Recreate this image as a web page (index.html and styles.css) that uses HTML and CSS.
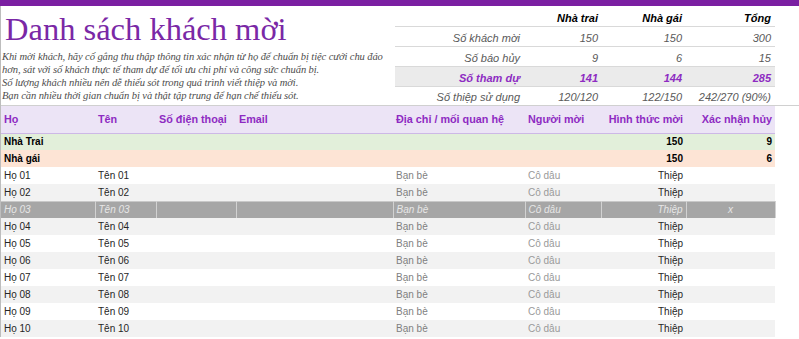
FILE: index.html
```html
<!DOCTYPE html>
<html lang="vi">
<head>
  <meta charset="UTF-8" />
  <title>Danh sách khách mời</title>
  <link rel="stylesheet" href="styles.css">
</head>
<body>

  <div class="top-bar"></div>

  <div class="sheet">
    <div class="top">
      <div class="intro">
        <h1 class="title">Danh sách khách mời</h1>
        <p class="desc">
          Khi mời khách, hãy cố gắng thu thập thông tin xác nhận từ họ để chuẩn bị tiệc cưới chu đáo<br>
          hơn, sát với số khách thực tế tham dự để tối ưu chi phí và công sức chuẩn bị.<br>
          Số lượng khách nhiều nên dễ thiếu sót trong quá trình viết thiệp và mời.<br>
          Bạn cần nhiều thời gian chuẩn bị và thật tập trung để hạn chế thiếu sót.
        </p>
      </div>

      <table class="summary">
        <colgroup>
          <col class="c-label"><col class="c-side"><col class="c-side2"><col class="c-total">
        </colgroup>
        <thead>
          <tr>
            <th></th>
            <th>Nhà trai</th>
            <th>Nhà gái</th>
            <th>Tổng</th>
          </tr>
        </thead>
        <tbody>
          <tr>
            <td>Số khách mời</td><td>150</td><td>150</td><td>300</td>
          </tr>
          <tr>
            <td>Số báo hủy</td><td>9</td><td>6</td><td>15</td>
          </tr>
          <tr class="attending">
            <td>Số tham dự</td><td>141</td><td>144</td><td>285</td>
          </tr>
          <tr class="last">
            <td>Số thiệp sử dụng</td><td>120/120</td><td>122/150</td><td>242/270 (90%)</td>
          </tr>
        </tbody>
      </table>
    </div>

    <table class="guests">
      <colgroup>
        <col style="width:94px"><col style="width:61px"><col style="width:80px"><col style="width:157px">
        <col style="width:132px"><col style="width:76px"><col style="width:85px"><col style="width:89px">
      </colgroup>
      <thead>
        <tr>
          <th>Họ</th>
          <th>Tên</th>
          <th>Số điện thoại</th>
          <th>Email</th>
          <th>Địa chỉ / mối quan hệ</th>
          <th>Người mời</th>
          <th class="num">Hình thức mời</th>
          <th class="num">Xác nhận hủy</th>
        </tr>
      </thead>
      <tbody>
        <tr class="group groom">
          <td>Nhà Trai</td><td></td><td></td><td></td><td></td><td></td>
          <td class="num">150</td><td class="num">9</td>
        </tr>
        <tr class="group bride">
          <td>Nhà gái</td><td></td><td></td><td></td><td></td><td></td>
          <td class="num">150</td><td class="num">6</td>
        </tr>
        <tr>
          <td>Họ 01</td><td>Tên 01</td><td></td><td></td>
          <td class="muted">Bạn bè</td><td class="faint">Cô dâu</td><td class="num">Thiệp</td><td></td>
        </tr>
        <tr class="alt">
          <td>Họ 02</td><td>Tên 02</td><td></td><td></td>
          <td class="muted">Bạn bè</td><td class="faint">Cô dâu</td><td class="num">Thiệp</td><td></td>
        </tr>
        <tr class="cancelled">
          <td>Họ 03</td><td>Tên 03</td><td></td><td></td>
          <td>Bạn bè</td><td>Cô dâu</td><td class="num">Thiệp</td><td class="center">x</td>
        </tr>
        <tr class="alt">
          <td>Họ 04</td><td>Tên 04</td><td></td><td></td>
          <td class="muted">Bạn bè</td><td class="faint">Cô dâu</td><td class="num">Thiệp</td><td></td>
        </tr>
        <tr>
          <td>Họ 05</td><td>Tên 05</td><td></td><td></td>
          <td class="muted">Bạn bè</td><td class="faint">Cô dâu</td><td class="num">Thiệp</td><td></td>
        </tr>
        <tr class="alt">
          <td>Họ 06</td><td>Tên 06</td><td></td><td></td>
          <td class="muted">Bạn bè</td><td class="faint">Cô dâu</td><td class="num">Thiệp</td><td></td>
        </tr>
        <tr>
          <td>Họ 07</td><td>Tên 07</td><td></td><td></td>
          <td class="muted">Bạn bè</td><td class="faint">Cô dâu</td><td class="num">Thiệp</td><td></td>
        </tr>
        <tr class="alt">
          <td>Họ 08</td><td>Tên 08</td><td></td><td></td>
          <td class="muted">Bạn bè</td><td class="faint">Cô dâu</td><td class="num">Thiệp</td><td></td>
        </tr>
        <tr>
          <td>Họ 09</td><td>Tên 09</td><td></td><td></td>
          <td class="muted">Bạn bè</td><td class="faint">Cô dâu</td><td class="num">Thiệp</td><td></td>
        </tr>
        <tr class="alt">
          <td>Họ 10</td><td>Tên 10</td><td></td><td></td>
          <td class="muted">Bạn bè</td><td class="faint">Cô dâu</td><td class="num">Thiệp</td><td></td>
        </tr>
      </tbody>
    </table>
  </div>

</body>
</html>
```

FILE: styles.css
```css
:root {
  --purple: #7b1fa2;
  --title-purple: #7a28a6;
  --head-purple: #8e2bc2;
  --lavender: #ece4f6;
  --row-alt: #f2f2f2;
  --text: #262626;
  --sans: "Liberation Sans", Arial, sans-serif;
  --serif: "Liberation Serif", "Times New Roman", serif;
}

* {
  box-sizing: border-box;
  margin: 0;
  padding: 0;
}

body {
  background: #ffffff;
  color: var(--text);
  font-family: var(--sans);
  overflow: hidden;
}

.top-bar {
  height: 6px;
  background: var(--purple);
}

.sheet {
  border-left: 1px solid #bdbdbd;
}

/* top area: title + summary */
.top {
  display: flex;
  height: 100px;
  border-bottom: 1px solid #d0d0d0;
}

.intro {
  width: 394px;
  padding-left: 4px;
}

.title {
  font-family: var(--serif);
  font-weight: normal;
  font-size: 32.5px;
  line-height: 36px;
  color: var(--title-purple);
  margin-top: 5px;
}

.desc {
  font-family: var(--serif);
  font-style: italic;
  font-size: 10.55px;
  line-height: 13px;
  letter-spacing: -0.1px;
  color: #4d4d4d;
  white-space: nowrap;
  margin-top: 3px;
  margin-left: -3px;
}

.summary {
  width: 380px;
  border-collapse: collapse;
  table-layout: fixed;
  font-size: 11px;
  font-style: italic;
}

.c-label { width: 127px; }
.c-side { width: 78px; }
.c-side2 { width: 84px; }
.c-total { width: 91px; }

.summary th,
.summary td {
  height: 20px;
  padding: 0 2px 2px 0;
  text-align: right;
  vertical-align: bottom;
  border-bottom: 1px solid #d9d9d9;
  color: #595959;
  font-weight: normal;
}

.summary th {
  color: #000000;
  font-weight: bold;
}

.summary th:last-child,
.summary td:last-child {
  padding-right: 4px;
}

.summary .attending td {
  background: #ebebeb;
  color: var(--head-purple);
  font-weight: bold;
}

.summary .last td {
  border-bottom: none;
  height: 19px;
}

/* guest list */
.guests {
  width: 774px;
  border-collapse: collapse;
  table-layout: fixed;
  font-size: 10px;
}

.guests th {
  height: 27px;
  background: var(--lavender);
  border-bottom: 1px solid #cdb8e6;
  color: var(--head-purple);
  font-size: 10.8px;
  font-weight: bold;
  text-align: left;
  padding: 0 3px;
  white-space: nowrap;
}

.guests td {
  height: 17px;
  padding: 0 3px;
  white-space: nowrap;
  overflow: hidden;
}

.guests .num {
  text-align: right;
}

.guests .center {
  text-align: center;
}

.guests .alt td {
  background: var(--row-alt);
}

.guests .muted {
  color: #7f7f7f;
}

.guests .faint {
  color: #9a9a9a;
}

.guests .group td {
  font-weight: bold;
  color: #000000;
}

.guests .groom td {
  background: #e2efda;
}

.guests .bride td {
  background: #fde4d5;
}

.guests .cancelled td {
  background: #a6a6a6;
  color: #e6e6e6;
  font-style: italic;
  border-right: 1px solid #d2d2d2;
  border-top: 1px solid #c8c8c8;
}
```
